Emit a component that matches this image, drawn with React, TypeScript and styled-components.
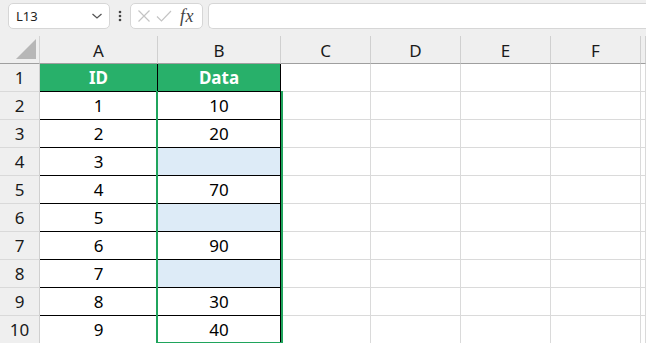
import React from "react";
import styled, { createGlobalStyle } from "styled-components";

const Global = createGlobalStyle`
  html, body { margin: 0; padding: 0; background: #ffffff; overflow: hidden; }
  body { font-family: "Noto Sans", "Open Sans", sans-serif; }
`;

const Page = styled.div`
  width: 646px;
  height: 343px;
  overflow: hidden;
  background: #efefef;
  display: flex;
  flex-direction: column;
`;

const Toolbar = styled.div`
  height: 36px;
  flex: none;
  display: flex;
  align-items: flex-start;
  padding: 3px 0 0 8px;
  box-sizing: border-box;
`;

const NameBox = styled.div`
  width: 102px;
  height: 26px;
  box-sizing: border-box;
  background: #fff;
  border: 1px solid #d6d6d6;
  border-radius: 5px;
  display: flex;
  align-items: center;
  justify-content: space-between;
  padding: 0 6px 0 7px;
  font-size: 13px;
  color: #222;
`;

const Dots = styled.div`
  width: 20px;
  height: 26px;
  display: flex;
  align-items: center;
  justify-content: center;
`;

const FxBox = styled.div`
  width: 73px;
  height: 26px;
  box-sizing: border-box;
  background: #fff;
  border: 1px solid #d6d6d6;
  border-radius: 5px;
  display: flex;
  align-items: center;
  gap: 5px;
  padding: 0 4px 0 6px;
`;

const Fx = styled.span`
  font-family: "Liberation Serif", "DejaVu Serif", serif;
  font-style: italic;
  font-size: 18px;
  color: #444;
  margin-left: 3px;
  letter-spacing: 0.5px;
`;

const FormulaInput = styled.div`
  flex: 1;
  height: 26px;
  margin-left: 5px;
  box-sizing: border-box;
  background: #fff;
  border: 1px solid #d6d6d6;
  border-right: none;
  border-radius: 5px 0 0 5px;
`;

const Grid = styled.div`
  display: grid;
  grid-template-columns: 40px 118px 123px 90px 90px 90px 90px 1fr;
  grid-template-rows: repeat(11, 28px);
  background: #fff;
  position: relative;
`;

const Corner = styled.div`
  background: #efefef;
  border-right: 1px solid #d4d4d4;
  border-bottom: 1px solid #9f9f9f;
  box-sizing: border-box;
  display: flex;
  align-items: flex-end;
  justify-content: flex-end;
  padding: 0 3px 4px 0;
`;

const Triangle = styled.div`
  width: 0;
  height: 0;
  border-left: 20px solid transparent;
  border-bottom: 20px solid #b7b7b7;
`;

const ColHead = styled.div`
  background: #efefef;
  border-right: 1px solid #d0d0d0;
  border-bottom: 1px solid #9f9f9f;
  box-sizing: border-box;
  display: flex;
  align-items: center;
  justify-content: center;
  font-size: 17px;
  color: #1a1a1a;
  padding-top: 1px;
`;

const RowHead = styled.div`
  background: #efefef;
  border-right: 1px solid #d0d0d0;
  border-bottom: 1px solid #d9d9d9;
  box-sizing: border-box;
  display: flex;
  align-items: center;
  justify-content: center;
  font-size: 17px;
  color: #1a1a1a;
`;

type Kind = "header" | "data" | "blue" | "empty";

const Cell = styled.div<{ $kind: Kind }>`
  box-sizing: border-box;
  display: flex;
  align-items: center;
  justify-content: center;
  font-size: 17px;
  color: #000;
  background: ${(p) =>
    p.$kind === "header" ? "#28b06a" : p.$kind === "blue" ? "#ddebf7" : "#fff"};
  border-right: 1px solid ${(p) => (p.$kind === "empty" ? "#dadada" : "#000")};
  border-bottom: 1px solid ${(p) => (p.$kind === "empty" ? "#dadada" : "#000")};
  ${(p) => (p.$kind === "header" ? "color: #fff; font-weight: 700;" : "")}
`;

const Selection = styled.div`
  position: absolute;
  grid-column: 3 / 4;
  grid-row: 3 / 12;
  top: -1px;
  left: -2px;
  right: -2px;
  bottom: 0;
  border: 2px solid #1fa45c;
  border-top: none;
  pointer-events: none;
  z-index: 2;
`;

const cols = ["A", "B", "C", "D", "E", "F", ""];
const data: [string, string][] = [
  ["1", "10"],
  ["2", "20"],
  ["3", ""],
  ["4", "70"],
  ["5", ""],
  ["6", "90"],
  ["7", ""],
  ["8", "30"],
  ["9", "40"],
];

export default function App() {
  return (
    <Page>
      <Global />
      <Toolbar>
        <NameBox>
          <span>L13</span>
          <svg width="12" height="8" viewBox="0 0 12 8">
            <path d="M1.5 2 L6 6 L10.5 2" fill="none" stroke="#555" strokeWidth="1.3" />
          </svg>
        </NameBox>
        <Dots>
          <svg width="4" height="12" viewBox="0 0 4 12">
            <circle cx="2" cy="2" r="1.3" fill="#444" />
            <circle cx="2" cy="6" r="1.3" fill="#444" />
            <circle cx="2" cy="10" r="1.3" fill="#444" />
          </svg>
        </Dots>
        <FxBox>
          <svg width="14" height="14" viewBox="0 0 14 14">
            <path d="M1.5 1.5 L12.5 12.5 M12.5 1.5 L1.5 12.5" stroke="#c4c4c4" strokeWidth="1.2" />
          </svg>
          <svg width="16" height="14" viewBox="0 0 16 14">
            <path d="M1 7.5 L5.5 12 L15 2" fill="none" stroke="#c4c4c4" strokeWidth="1.2" />
          </svg>
          <Fx>fx</Fx>
        </FxBox>
        <FormulaInput />
      </Toolbar>
      <Grid>
        <Corner>
          <Triangle />
        </Corner>
        {cols.map((c, i) => (
          <ColHead key={i}>{c}</ColHead>
        ))}
        <RowHead>1</RowHead>
        <Cell $kind="header">ID</Cell>
        <Cell $kind="header">Data</Cell>
        {[0, 1, 2, 3, 4].map((k) => (
          <Cell key={k} $kind="empty" />
        ))}
        {data.map(([id, v], r) => (
          <React.Fragment key={r}>
            <RowHead>{r + 2}</RowHead>
            <Cell $kind="data">{id}</Cell>
            <Cell $kind={v ? "data" : "blue"}>{v}</Cell>
            {[0, 1, 2, 3, 4].map((k) => (
              <Cell key={k} $kind="empty" />
            ))}
          </React.Fragment>
        ))}
        <Selection />
      </Grid>
    </Page>
  );
}
